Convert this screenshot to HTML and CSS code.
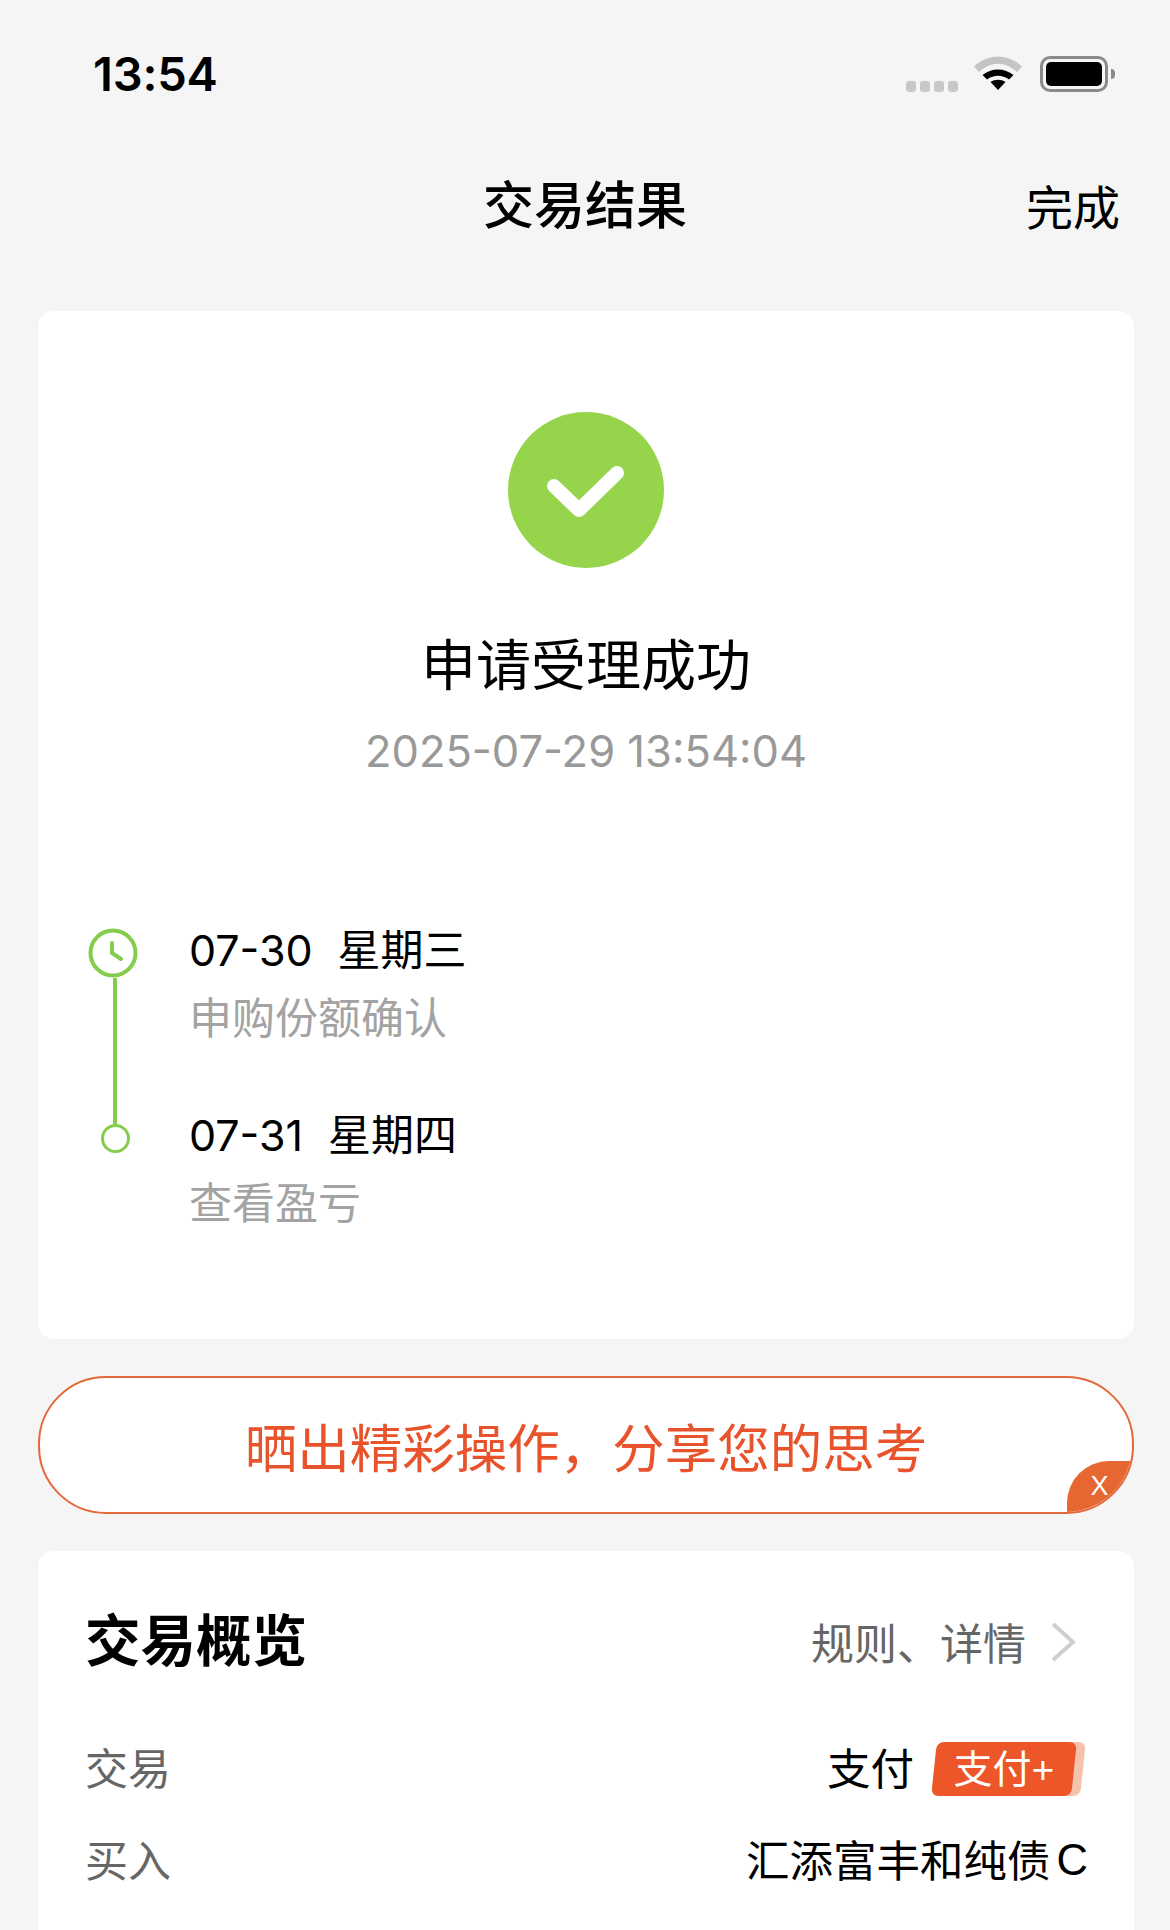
FILE: index.html
```html
<!DOCTYPE html>
<html lang="zh-CN">
<head>
    <meta charset="UTF-8">
    <meta name="viewport" content="width=device-width, initial-scale=1.0">
    <title>交易结果</title>
    <link rel="stylesheet" href="styles.css">
</head>
<body>
    <div class="status-bar">
        <span class="status-time">13:54</span>
        <div class="status-icons">
            <div class="signal-dots"><i></i><i></i><i></i><i></i></div>
            <svg class="wifi-icon" width="50" height="38" viewBox="0 0 50 38">
                <path d="M1 14.5 C15 1 35 1 49 14.5 L44 20 C32 9 18 9 6 20 Z" fill="#c4c4c4"/>
                <path d="M9.500 23 C18 15.500 32 15.500 40.500 23 L36 27.500 C29 22.500 21 22.500 14 27.500 Z" fill="#000"/>
                <path d="M17.500 30 C22 27 28 27 32.500 30 L25 38 Z" fill="#000"/>
            </svg>
            <div class="battery"><div class="battery-level"></div></div>
            <div class="battery-nub"></div>
        </div>
    </div>

    <div class="nav-bar">
        <h1>交易结果</h1>
        <span class="nav-done">完成</span>
    </div>

    <div class="card result-card">
        <svg class="success-icon" width="156" height="156" viewBox="0 0 156 156">
            <circle cx="78" cy="78" r="78" fill="#95d44b"/>
            <path d="M46 74 L71 98 L109 61" fill="none" stroke="#fff" stroke-width="14" stroke-linecap="round" stroke-linejoin="round"/>
        </svg>
        <div class="result-title">申请受理成功</div>
        <div class="result-time">2025-07-29 13:54:04</div>

        <div class="timeline">
            <div class="timeline-rail">
                <svg class="clock-icon" width="50" height="50" viewBox="0 0 50 50">
                    <circle cx="25" cy="25" r="22.500" fill="#fff" stroke="#84cc4c" stroke-width="4"/>
                    <path d="M24 15 V25 L33 31" fill="none" stroke="#84cc4c" stroke-width="4" stroke-linecap="round" stroke-linejoin="round"/>
                </svg>
                <div class="rail-line"></div>
                <div class="rail-dot"></div>
            </div>
            <div class="timeline-steps">
                <div class="step">
                    <div class="step-date">07-30<span class="step-day">星期三</span></div>
                    <div class="step-label">申购份额确认</div>
                </div>
                <div class="step">
                    <div class="step-date">07-31<span class="step-day">星期四</span></div>
                    <div class="step-label">查看盈亏</div>
                </div>
            </div>
        </div>
    </div>

    <div class="share-banner">
        <span>晒出精彩操作，分享您的思考</span>
        <div class="share-close">X</div>
    </div>

    <div class="card overview-card">
        <div class="overview-head">
            <h2>交易概览</h2>
            <div class="overview-link">
                规则、详情
                <svg width="26" height="42" viewBox="0 0 26 42">
                    <path d="M3 3 L23 21 L3 39" fill="none" stroke="#cfcfcf" stroke-width="4"/>
                </svg>
            </div>
        </div>
        <div class="row">
            <span class="row-label">交易</span>
            <div class="row-value">
                支付
                <div class="pay-tag"><span class="pay-tag-text">支付+</span></div>
            </div>
        </div>
        <div class="row">
            <span class="row-label">买入</span>
            <div class="row-value">汇添富丰和纯债<span class="fund-class">C</span></div>
        </div>
    </div>
</body>
</html>
```

FILE: styles.css
```css
* {
    box-sizing: border-box;
}

html, body {
    height: 100%;
}

body {
    margin: 0;
    background-color: #f5f5f5;
    color: #000;
    font-family: "Liberation Sans", "Noto Sans CJK SC", sans-serif;
    overflow: hidden;
}

/* status bar */
.status-bar {
    display: flex;
    justify-content: space-between;
    align-items: center;
    height: 150px;
    padding: 0 55px 0 93px;
}

.status-time {
    margin-top: -3px;
    font-family: "Inter", sans-serif;
    font-size: 47px;
    font-weight: 600;
    letter-spacing: -0.2px;
}

.status-icons {
    display: flex;
    align-items: center;
}

.signal-dots {
    display: flex;
    gap: 4px;
    margin: 23px 15px 0 0;
}

.signal-dots i {
    display: block;
    width: 10px;
    height: 11px;
    border-radius: 3px;
    background-color: #c8c8c8;
}

.wifi-icon {
    margin: -9px 17px 0 0;
}

.battery {
    width: 68px;
    height: 36px;
    margin-top: -2px;
    padding: 3px;
    border: 3px solid #8a8a8a;
    border-radius: 10px;
}

.battery-level {
    height: 100%;
    border-radius: 5px;
    background-color: #000;
}

.battery-nub {
    width: 4px;
    height: 10px;
    margin: -2px 0 0 3px;
    border-radius: 0 4px 4px 0;
    background-color: #8a8a8a;
}

/* nav */
.nav-bar {
    position: relative;
    height: 161px;
    padding-top: 27px;
    text-align: center;
}

.nav-bar h1 {
    margin: 0;
    font-size: 51px;
    line-height: 60px;
    font-weight: 500;
}

.nav-done {
    position: absolute;
    right: 50px;
    top: 29px;
    font-size: 47px;
    line-height: 60px;
}

.card {
    margin: 0 36px 0 38px;
    background-color: #fff;
    border-radius: 16px;
}

/* result */
.result-card {
    height: 1028px;
    padding-top: 101px;
    text-align: center;
}

.success-icon {
    display: block;
    margin: 0 auto;
}

.result-title {
    margin-top: 68px;
    font-size: 55px;
    line-height: 60px;
}

.result-time {
    margin-top: 30px;
    font-family: "Inter", sans-serif;
    font-size: 43.5px;
    line-height: 50px;
    color: #999;
}

.timeline {
    display: flex;
    margin-top: 144px;
    padding-left: 50px;
    text-align: left;
}

.timeline-rail {
    display: flex;
    flex-direction: column;
    align-items: center;
    width: 54px;
    padding-top: 8px;
}

.clock-icon {
    display: block;
    margin-right: 4px;
    flex: none;
}

.rail-line {
    width: 4px;
    height: 146px;
    background-color: #84cc4c;
}

.rail-dot {
    width: 29px;
    height: 29px;
    border: 3px solid #84cc4c;
    border-radius: 50%;
}

.timeline-steps {
    margin: 2px 0 0 47px;
}

.step + .step {
    margin-top: 60px;
}

.step-date {
    font-family: "Inter", "Noto Sans CJK SC", sans-serif;
    font-size: 43px;
    line-height: 56px;
}

.step-day {
    margin-left: 25px;
    font-size: 43px;
}

.step-label {
    margin-top: 13px;
    font-size: 43px;
    line-height: 56px;
    color: #a3a3a3;
}

/* share banner */
.share-banner {
    position: relative;
    display: flex;
    justify-content: center;
    align-items: center;
    height: 138px;
    margin: 37px 36px 37px 38px;
    background-color: #fff;
    border: 2px solid #e4693a;
    border-radius: 68px;
    color: #e8532b;
    font-size: 52.500px;
    overflow: hidden;
}

.share-close {
    position: absolute;
    right: 0;
    bottom: 0;
    width: 65px;
    height: 51px;
    background-color: #e66732;
    border-top-left-radius: 42px;
    color: #fff;
    font-size: 27px;
    line-height: 50px;
    text-align: center;
}

/* overview */
.overview-card {
    padding: 52px 38px 0 47px;
    height: 500px;
    border-radius: 16px 16px 0 0;
}

.overview-head {
    display: flex;
    justify-content: space-between;
    align-items: center;
    height: 72px;
    margin-bottom: 63px;
}

.overview-head h2 {
    margin: -5px 0 0;
    font-size: 55.500px;
    font-weight: 700;
}

.overview-link {
    display: flex;
    align-items: center;
    gap: 24px;
    margin: 4px 20px 0 0;
    font-size: 43px;
    color: #666;
}

.overview-link svg {
    margin-top: 2px;
}

.row {
    display: flex;
    justify-content: space-between;
    align-items: center;
    height: 56px;
    margin-bottom: 36px;
}

.row-label {
    font-size: 43px;
    color: #666;
}

.row-value {
    display: flex;
    align-items: center;
    margin-right: 8px;
    font-size: 43.500px;
}

.fund-class {
    margin: 4px 0 0 6px;
}

/* slanted tag with a paler copy peeking out behind it */
.pay-tag {
    position: relative;
    width: 140px;
    height: 54px;
    margin: 6px 14px 0 20px;
    background-color: #ec5628;
    border-radius: 7px;
    transform: skewX(-6deg);
    box-shadow: 9px 0 0 #f5c2ae;
    text-align: center;
}

.pay-tag-text {
    display: block;
    color: #fff;
    font-size: 39px;
    line-height: 56px;
    transform: skewX(6deg);
}
```
